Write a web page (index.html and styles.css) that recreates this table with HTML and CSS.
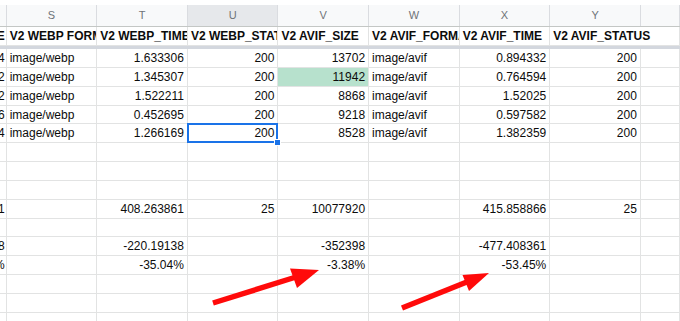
FILE: index.html
```html
<!DOCTYPE html>
<html>
<head>
<meta charset="utf-8">
<link rel="stylesheet" href="styles.css">
</head>
<body>
<div class="page">
  <div class="topgap"></div>
  <div class="sheet">
    <div class="row colhead">
      <div class="ch"></div><div class="ch">S</div><div class="ch">T</div><div class="ch sel">U</div><div class="ch">V</div><div class="ch">W</div><div class="ch">X</div><div class="ch">Y</div><div class="ch"></div>
    </div>
    <div class="row titles">
      <div class="c r">E</div><div class="c">V2 WEBP FORMAT</div><div class="c">V2 WEBP_TIME</div><div class="c">V2 WEBP_STATUS</div><div class="c">V2 AVIF_SIZE</div><div class="c">V2 AVIF_FORMAT</div><div class="c">V2 AVIF_TIME</div><div class="c over">V2 AVIF_STATUS</div><div class="c noline"></div>
    </div>
    <div class="freeze"></div>
    <div class="row">
      <div class="c r">4</div><div class="c">image/webp</div><div class="c r">1.633306</div><div class="c r">200</div><div class="c r">13702</div><div class="c">image/avif</div><div class="c r">0.894332</div><div class="c r">200</div><div class="c"></div>
    </div>
    <div class="row">
      <div class="c r">2</div><div class="c">image/webp</div><div class="c r">1.345307</div><div class="c r">200</div><div class="c r green">11942</div><div class="c">image/avif</div><div class="c r">0.764594</div><div class="c r">200</div><div class="c"></div>
    </div>
    <div class="row">
      <div class="c r">2</div><div class="c">image/webp</div><div class="c r">1.522211</div><div class="c r">200</div><div class="c r">8868</div><div class="c">image/avif</div><div class="c r">1.52025</div><div class="c r">200</div><div class="c"></div>
    </div>
    <div class="row">
      <div class="c r">6</div><div class="c">image/webp</div><div class="c r">0.452695</div><div class="c r">200</div><div class="c r">9218</div><div class="c">image/avif</div><div class="c r">0.597582</div><div class="c r">200</div><div class="c"></div>
    </div>
    <div class="row">
      <div class="c r">4</div><div class="c">image/webp</div><div class="c r">1.266169</div><div class="c r active">200<span class="handle"></span></div><div class="c r">8528</div><div class="c">image/avif</div><div class="c r">1.382359</div><div class="c r">200</div><div class="c"></div>
    </div>
    <div class="row">
      <div class="c"></div><div class="c"></div><div class="c"></div><div class="c"></div><div class="c"></div><div class="c"></div><div class="c"></div><div class="c"></div><div class="c"></div>
    </div>
    <div class="row">
      <div class="c"></div><div class="c"></div><div class="c"></div><div class="c"></div><div class="c"></div><div class="c"></div><div class="c"></div><div class="c"></div><div class="c"></div>
    </div>
    <div class="row">
      <div class="c"></div><div class="c"></div><div class="c"></div><div class="c"></div><div class="c"></div><div class="c"></div><div class="c"></div><div class="c"></div><div class="c"></div>
    </div>
    <div class="row">
      <div class="c r">1</div><div class="c"></div><div class="c r">408.263861</div><div class="c r">25</div><div class="c r">10077920</div><div class="c"></div><div class="c r">415.858866</div><div class="c r">25</div><div class="c"></div>
    </div>
    <div class="row">
      <div class="c"></div><div class="c"></div><div class="c"></div><div class="c"></div><div class="c"></div><div class="c"></div><div class="c"></div><div class="c"></div><div class="c"></div>
    </div>
    <div class="row">
      <div class="c r">8</div><div class="c"></div><div class="c r">-220.19138</div><div class="c"></div><div class="c r">-352398</div><div class="c"></div><div class="c r">-477.408361</div><div class="c"></div><div class="c"></div>
    </div>
    <div class="row">
      <div class="c r">%</div><div class="c"></div><div class="c r">-35.04%</div><div class="c"></div><div class="c r">-3.38%</div><div class="c"></div><div class="c r">-53.45%</div><div class="c"></div><div class="c"></div>
    </div>
    <div class="row">
      <div class="c"></div><div class="c"></div><div class="c"></div><div class="c"></div><div class="c"></div><div class="c"></div><div class="c"></div><div class="c"></div><div class="c"></div>
    </div>
    <div class="row">
      <div class="c"></div><div class="c"></div><div class="c"></div><div class="c"></div><div class="c"></div><div class="c"></div><div class="c"></div><div class="c"></div><div class="c"></div>
    </div>
    <div class="row">
      <div class="c"></div><div class="c"></div><div class="c"></div><div class="c"></div><div class="c"></div><div class="c"></div><div class="c"></div><div class="c"></div><div class="c"></div>
    </div>
  </div>
  <svg class="arrows" width="680" height="321" viewBox="0 0 680 321">
    <line x1="213" y1="303" x2="296" y2="277" stroke="#ff0a0a" stroke-width="5.5"/>
    <polygon points="319,270 290,268.5 297,288" fill="#ff0a0a"/>
    <line x1="402" y1="308" x2="468" y2="281.5" stroke="#ff0a0a" stroke-width="5.5"/>
    <polygon points="489,273 462.5,275 469,291" fill="#ff0a0a"/>
  </svg>
</div>
</body>
</html>
```

FILE: styles.css
```css
html, body {
  margin: 0;
  padding: 0;
  background: #fff;
}
body {
  width: 680px;
  height: 321px;
  overflow: hidden;
  font-family: "Liberation Sans", Arial, sans-serif;
  color: #0c0c0c;
}
.page {
  position: relative;
  width: 680px;
  height: 321px;
  overflow: hidden;
}
.topgap {
  height: 5px;
  background: #fff;
}
.sheet {
  display: flex;
  flex-direction: column;
}
.row {
  display: grid;
  grid-template-columns: 6.7px repeat(7, 90.6px) 1fr;
  height: 18.85px;
}
.colhead {
  height: 22px;
  background: #f8f9fa;
  border-bottom: 1px solid #c4c7c5;
  box-sizing: border-box;
}
.ch {
  border-right: 1px solid #dadce0;
  font-size: 11px;
  color: #6f7378;
  text-align: center;
  line-height: 21px;
}
.ch.sel {
  background: #e6e8eb;
}
.titles {
  height: 19px;
}
.titles .c {
  font-weight: bold;
  padding-left: 3px;
  text-align: left;
}
.titles .c.r {
  text-align: right;
  padding-left: 0;
}
.titles .over {
  overflow: visible;
  border-right: none;
  position: relative;
  z-index: 1;
}
.freeze {
  height: 3px;
  background: #d3d7de;
}
.c {
  box-sizing: border-box;
  border-right: 1px solid #e2e3e3;
  border-bottom: 1px solid #e2e3e3;
  font-size: 12px;
  line-height: 18px;
  white-space: nowrap;
  overflow: hidden;
  padding: 0 3px;
  position: relative;
}
.c.r {
  text-align: right;
  padding: 0 3px 0 0;
}
.row > .c:first-child {
  padding: 0 1px 0 0;
  display: flex;
  justify-content: flex-end;
}
.green {
  background: #b7e1cd;
}
.active {
  overflow: visible;
  z-index: 2;
}
.active::after {
  content: "";
  position: absolute;
  left: -1px;
  top: -1px;
  right: -1px;
  bottom: -1px;
  border: 2px solid #1a73e8;
}
.handle {
  position: absolute;
  right: -4px;
  bottom: -4px;
  width: 5px;
  height: 5px;
  background: #1a73e8;
  border: 1px solid #fff;
  z-index: 3;
}
.arrows {
  position: absolute;
  left: 0;
  top: 0;
  pointer-events: none;
}
```
